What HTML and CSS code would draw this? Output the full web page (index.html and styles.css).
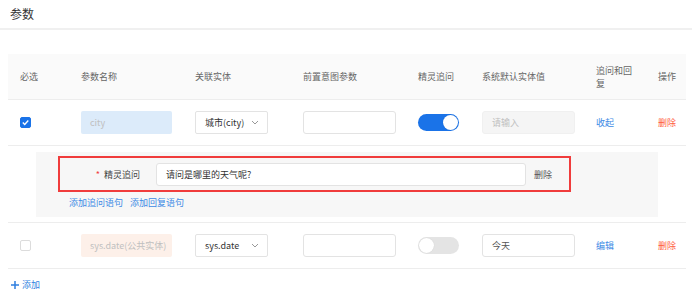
FILE: index.html
```html
<!DOCTYPE html>
<html lang="zh">
<head>
  <meta charset="UTF-8" />
  <title>参数</title>
  <link rel="stylesheet" href="styles.css">
</head>
<body>
  <div class="title">参数</div>

  <div class="table">
    <div class="row head">
      <div class="cell">必选</div>
      <div class="cell">参数名称</div>
      <div class="cell">关联实体</div>
      <div class="cell">前置意图参数</div>
      <div class="cell">精灵追问</div>
      <div class="cell">系统默认实体值</div>
      <div class="cell">追问和回复</div>
      <div class="cell">操作</div>
    </div>

    <div class="row">
      <div class="cell"><span class="check on"><svg width="9" height="9" viewBox="0 0 9 9"><path d="M1.8 4.6 L3.7 6.4 L7.3 2.6" fill="none" stroke="#fff" stroke-width="1.4"/></svg></span></div>
      <div class="cell"><div class="pill blue">city</div></div>
      <div class="cell"><div class="select">城市(city)<svg class="chev" width="8" height="5" viewBox="0 0 8 5"><path d="M1 1 L4 4 L7 1" fill="none" stroke="#999" stroke-width="1"/></svg></div></div>
      <div class="cell"><div class="input"></div></div>
      <div class="cell"><span class="switch on"><span class="knob"></span></span></div>
      <div class="cell"><div class="input disabled">请输入</div></div>
      <div class="cell"><a class="link">收起</a></div>
      <div class="cell"><a class="danger">删除</a></div>
    </div>

    <div class="expand">
      <div class="expand-box">
        <div class="highlight">
          <label class="form-label"><span class="req">*</span>精灵追问</label>
          <div class="input wide">请问是哪里的天气呢?</div>
          <a class="plain">删除</a>
        </div>
        <div class="links">
          <a class="link">添加追问语句</a>
          <a class="link">添加回复语句</a>
        </div>
      </div>
    </div>

    <div class="row">
      <div class="cell"><span class="check"></span></div>
      <div class="cell"><div class="pill peach">sys.date(公共实体)</div></div>
      <div class="cell"><div class="select">sys.date<svg class="chev" width="8" height="5" viewBox="0 0 8 5"><path d="M1 1 L4 4 L7 1" fill="none" stroke="#999" stroke-width="1"/></svg></div></div>
      <div class="cell"><div class="input"></div></div>
      <div class="cell"><span class="switch"><span class="knob"></span></span></div>
      <div class="cell"><div class="input">今天</div></div>
      <div class="cell"><a class="link">编辑</a></div>
      <div class="cell"><a class="danger">删除</a></div>
    </div>
  </div>

  <div class="add"><svg width="8" height="8" viewBox="0 0 8 8"><path d="M4 0 V8 M0 4 H8" stroke="#2f7fe0" stroke-width="1.5"/></svg>添加</div>
</body>
</html>
```

FILE: styles.css
```css
body {
  margin: 0;
  font-family: "Noto Sans CJK SC", sans-serif;
  font-size: 9px;
  color: #333;
  background: #fff;
}
.title {
  height: 28px;
  line-height: 27px;
  padding-left: 10px;
  font-size: 12px;
  color: #333;
  border-bottom: 2px solid #f0f0f0;
}
.table {
  margin: 24px 0 0 8px;
  width: 678px;
}
.row {
  display: grid;
  grid-template-columns: 61px 114px 108px 115px 64px 114px 62px 40px;
  height: 45px;
  border-bottom: 1px solid #ededed;
  align-items: center;
}
.row.head {
  background: #fafafa;
  color: #666;
}
.cell {
  padding: 0 10px 0 12px;
  line-height: 13px;
}
.head .cell:nth-child(7) { padding-right: 12px; }

.check {
  display: block;
  width: 11px;
  height: 11px;
  box-sizing: border-box;
  border: 1px solid #dcdcdc;
  border-radius: 2px;
  background: #fff;
}
.check.on {
  background: #1a73e8;
  border-color: #1a73e8;
  display: flex;
  align-items: center;
  justify-content: center;
}
.pill {
  width: 91px;
  height: 23px;
  line-height: 23px;
  border-radius: 2px;
  padding-left: 9px;
  box-sizing: border-box;
  color: #c0c0c0;
}
.pill.blue { background: #dcebfa; }
.pill.peach { background: #fdf0e9; }
.select {
  width: 73px;
  height: 23px;
  box-sizing: border-box;
  border: 1px solid #e3e3e3;
  border-radius: 2px;
  padding: 0 8px 0 9px;
  display: flex;
  align-items: center;
  justify-content: space-between;
  color: #333;
}
.input {
  width: 93px;
  height: 23px;
  line-height: 21px;
  box-sizing: border-box;
  border: 1px solid #e3e3e3;
  border-radius: 3px;
  padding-left: 9px;
  background: #fff;
  color: #555;
}
.input.disabled {
  background: #f5f5f5;
  border-color: #f0f0f0;
  color: #c0c0c0;
}
.switch {
  display: block;
  position: relative;
  width: 41px;
  height: 17px;
  border-radius: 9px;
  background: #e4e4e4;
}
.switch.on { background: #1a73e8; }
.knob {
  position: absolute;
  top: 1px;
  left: 1px;
  width: 15px;
  height: 15px;
  border-radius: 50%;
  background: #fff;
  box-shadow: 0 0 1px rgba(0,0,0,0.15);
}
.switch.on .knob { left: 25px; }
.link { color: #3d8ae5; text-decoration: none; }
.danger { color: #ff5c3c; }
.plain { color: #555; }

.expand {
  padding: 6px 28px 5px;
  border-bottom: 1px solid #ededed;
}
.expand-box {
  background: #f7f7f7;
  height: 65px;
  box-sizing: border-box;
  padding: 4px 0 0 22px;
}
.highlight {
  width: 513px;
  height: 36px;
  box-sizing: border-box;
  border: 2px solid #f03c3c;
  display: flex;
  align-items: center;
}
.form-label {
  width: 80px;
  text-align: right;
  color: #444;
}
.req { color: #f04040; margin-right: 4px; }
.input.wide {
  width: 370px;
  margin-left: 16px;
  color: #333;
}
.highlight .plain { margin-left: 8px; }
.links {
  margin-top: 4px;
  padding-left: 11px;
  line-height: 13px;
  display: flex;
  gap: 7px;
}
.add {
  margin: 9px 0 0 11px;
  line-height: 13px;
  color: #2f7fe0;
  display: flex;
  align-items: center;
  gap: 3px;
}
```
